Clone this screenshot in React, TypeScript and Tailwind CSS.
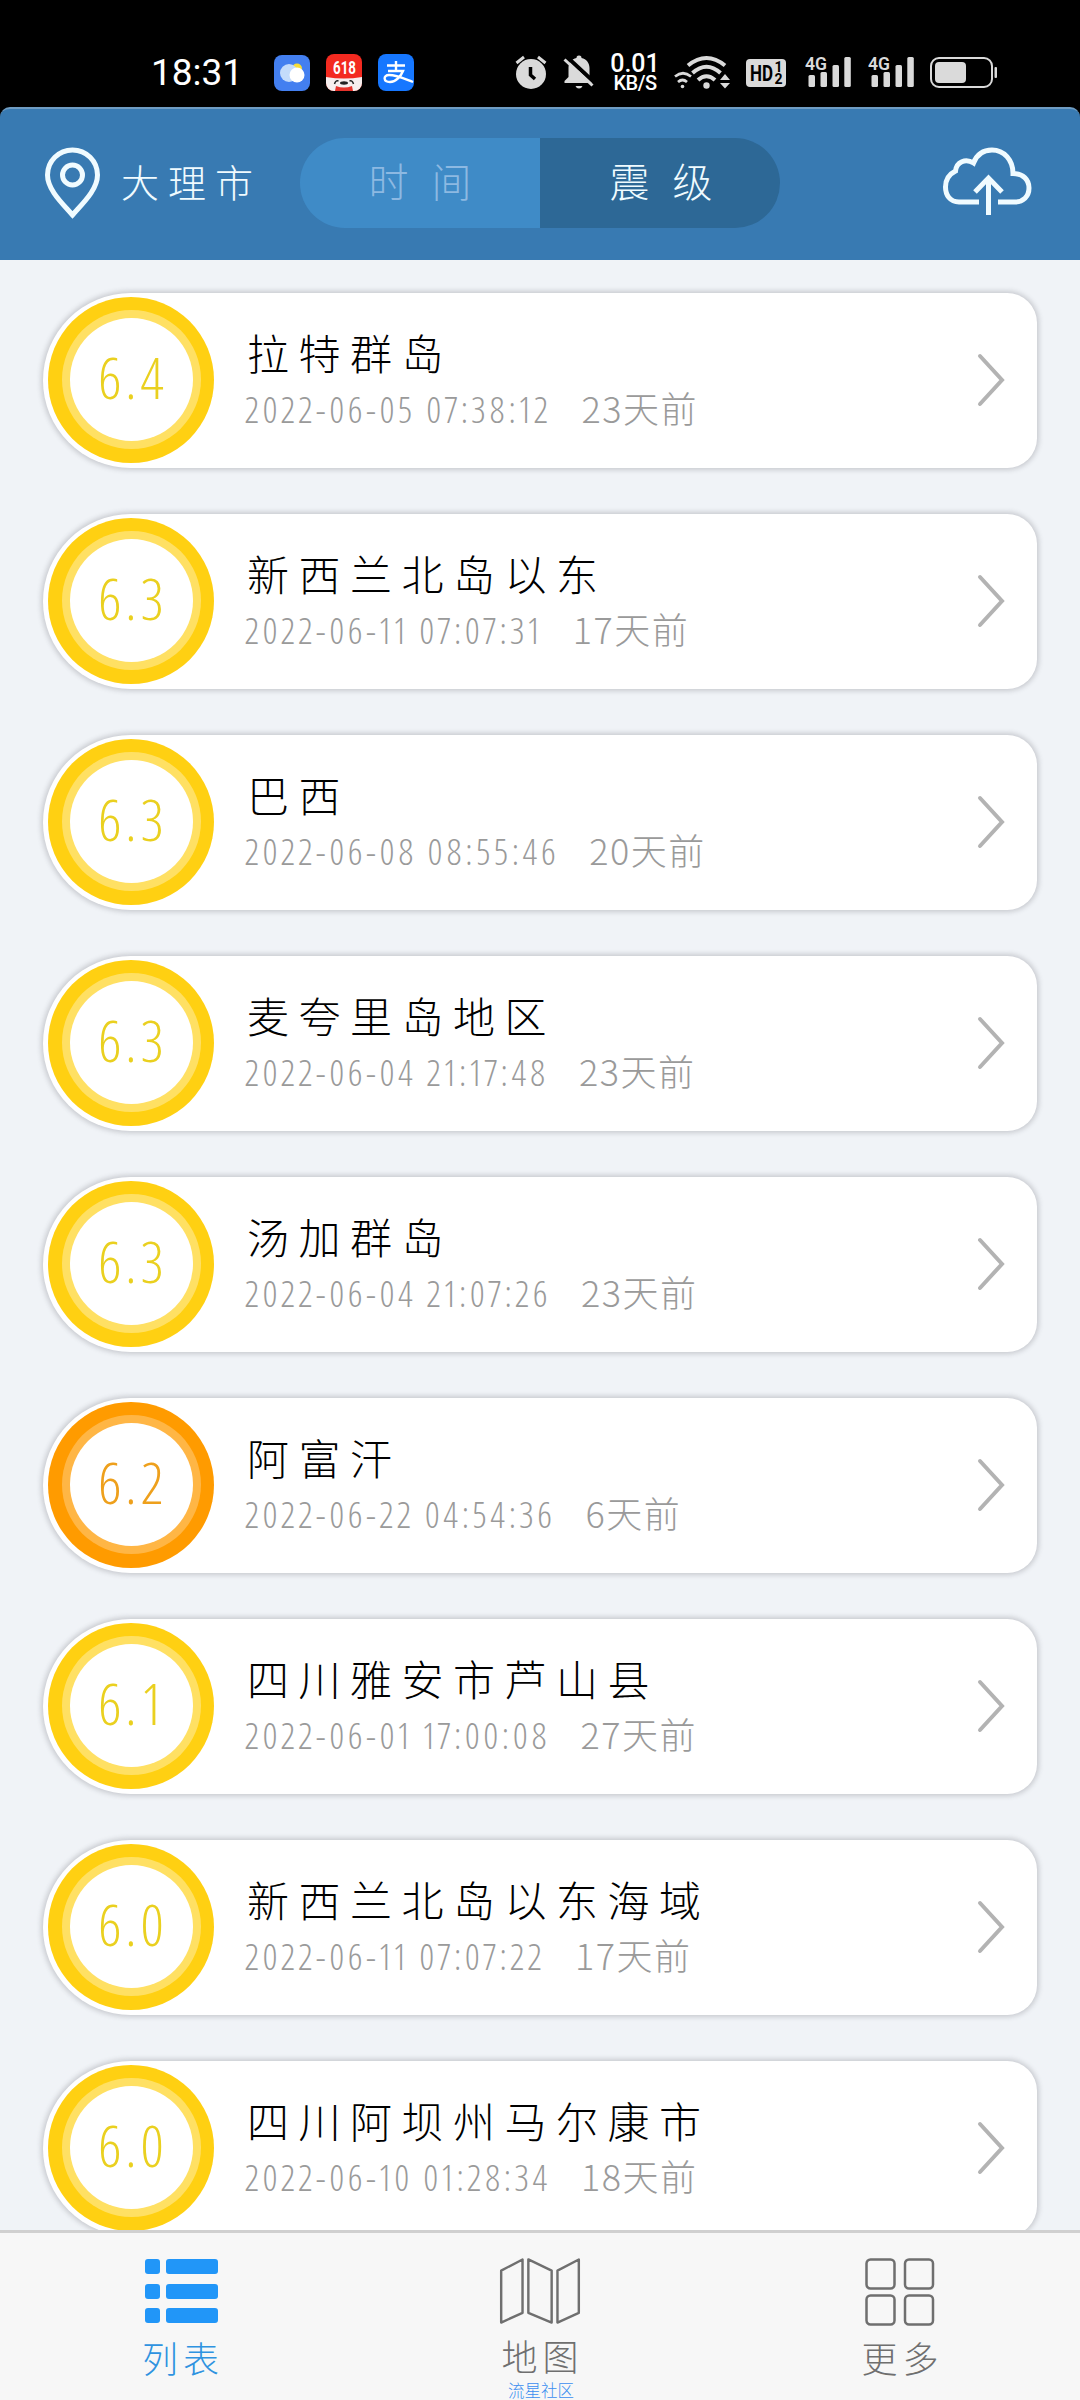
import React from 'react';

interface Quake {
    magnitude: string;
    place: string;
    time: string;
    ago: string;
    level: 'yellow' | 'orange';
}

const quakes: Quake[] = [
    { magnitude: '6.4', place: '拉特群岛', time: '2022-06-05 07:38:12', ago: '23天前', level: 'yellow' },
    { magnitude: '6.3', place: '新西兰北岛以东', time: '2022-06-11 07:07:31', ago: '17天前', level: 'yellow' },
    { magnitude: '6.3', place: '巴西', time: '2022-06-08 08:55:46', ago: '20天前', level: 'yellow' },
    { magnitude: '6.3', place: '麦夸里岛地区', time: '2022-06-04 21:17:48', ago: '23天前', level: 'yellow' },
    { magnitude: '6.3', place: '汤加群岛', time: '2022-06-04 21:07:26', ago: '23天前', level: 'yellow' },
    { magnitude: '6.2', place: '阿富汗', time: '2022-06-22 04:54:36', ago: '6天前', level: 'orange' },
    { magnitude: '6.1', place: '四川雅安市芦山县', time: '2022-06-01 17:00:08', ago: '27天前', level: 'yellow' },
    { magnitude: '6.0', place: '新西兰北岛以东海域', time: '2022-06-11 07:07:22', ago: '17天前', level: 'yellow' },
    { magnitude: '6.0', place: '四川阿坝州马尔康市', time: '2022-06-10 01:28:34', ago: '18天前', level: 'yellow' },
];

const levelStyles = {
    yellow: { outer: 'bg-[#ffd012]', inner: 'bg-[#ffe063]', text: 'text-[#ead01f]' },
    orange: { outer: 'bg-[#ff9b00]', inner: 'bg-[#ffb645]', text: 'text-[#eea01c]' },
};

function Signal() {
    return (
        <svg width="46" height="34" viewBox="0 0 46 34" fill="#dadada">
            <text x="0" y="16" fontSize="19" fontWeight="600" textLength="22" lengthAdjust="spacingAndGlyphs">4G</text>
            <rect x="3.5" y="21" width="6.5" height="12" rx="1.5" />
            <rect x="15.5" y="18" width="6.5" height="15" rx="1.5" />
            <rect x="27.5" y="11" width="6.5" height="22" rx="1.5" />
            <rect x="39.3" y="3" width="6.5" height="30" rx="1.5" />
        </svg>
    );
}

function StatusBar() {
    return (
        <div className="flex h-[107px] items-start bg-black pt-[54px] font-[Roboto,'Noto_Sans_CJK_SC',sans-serif] text-white">
            <div className="ml-[151px] w-[92px] whitespace-nowrap text-[37px] font-normal leading-[38px]">18:31</div>
            {/* weather */}
            <svg className="ml-[31px]" width="36" height="37" viewBox="0 0 36 37">
                <rect y="1" width="36" height="36" rx="8" fill="#437ff0" />
                <circle cx="23" cy="14.5" r="5" fill="#f7dc35" />
                <circle cx="15" cy="19" r="9" fill="#c4dcfb" />
                <circle cx="23" cy="21" r="7.5" fill="#fff" />
            </svg>
            {/* shopping */}
            <svg className="ml-4" width="36" height="37" viewBox="0 0 36 37">
                <defs>
                    <clipPath id="shop"><rect width="36" height="37" rx="8" /></clipPath>
                </defs>
                <g clipPath="url(#shop)">
                    <rect width="36" height="37" fill="#f32a20" />
                    <path d="M0 23q18 3 36 0v14H0z" fill="#f6eeee" />
                    <text x="7" y="19.5" fontSize="18" fontWeight="700" fill="#fff" textLength="23" lengthAdjust="spacingAndGlyphs">618</text>
                    <path d="M8.5 30q1-4 4-3M27.5 30q-1-4-4-3" fill="none" stroke="#222" strokeWidth="1.5" />
                    <ellipse cx="18" cy="29" rx="4" ry="1.7" fill="#222" />
                    <path d="M10 32q8 3 16 0l1 5H9z" fill="#e5322b" />
                </g>
            </svg>
            {/* pay */}
            <svg className="ml-4" width="36" height="37" viewBox="0 0 36 37" fill="none" stroke="#fff">
                <rect width="36" height="37" rx="8" fill="#1677ff" stroke="none" />
                <path d="M9 11.5h18M18 7v10M10 17h15c-2 5-7 11-13 11-7 0-7-7-1-7 8 0 16 4 24 7" strokeWidth="2.4" />
            </svg>

            <svg className="ml-[100px]" width="34" height="36" viewBox="0 0 34 36">
                <circle cx="17" cy="20" r="15" fill="#dadada" />
                <path d="M2.5 9l7.5-6M31.5 9l-7.5-6" stroke="#dadada" strokeWidth="3" />
                <path d="M16.5 13v8l4.5 4" fill="none" stroke="#000" strokeWidth="3.5" />
            </svg>
            <svg className="ml-[15px]" width="32" height="36" viewBox="0 0 32 36">
                <path d="M16 1.5c2 0 2.5 1 2.5 2.5 5 1 8 5 8 10v9l4 4v2H1.5v-2l4-4v-9c0-5 3-9 8-10 0-1.5.5-2.5 2.5-2.5zM12.5 32h7q-1 2.5-3.5 2.5T12.5 32z" fill="#dadada" />
                <path d="M4 3l28 26" stroke="#000" strokeWidth="4" />
                <path d="M1.5 5.5l28 26" stroke="#dadada" strokeWidth="3" />
            </svg>
            <div className="ml-[15px] flex w-[50px] flex-col items-center font-medium">
                <span className="text-[25px] leading-[20px]">0.01</span>
                <span className="text-[20px] leading-[18px] tracking-[-0.5px]">KB/S</span>
            </div>
            <svg className="ml-3" width="60" height="36" viewBox="0 0 60 36" fill="none" stroke="#dadada">
                <path d="M3 22.5q8-6.5 16 0M6 28q4.5-4 9 0" strokeWidth="2.7" />
                <path d="M16 11.5q18.5-15 37 0M20.5 19q14-12.5 28 0M26 26q8.5-7.5 17 0" strokeWidth="4" />
                <circle cx="10.5" cy="32.5" r="1.8" fill="#dadada" stroke="none" />
                <circle cx="34.5" cy="31.5" r="3.2" fill="#dadada" stroke="none" />
                <path d="M53 20l5 6H48zM53 34.5l5-5.5H48z" fill="#dadada" stroke="none" />
            </svg>
            <svg className="ml-[14px]" width="40" height="36" viewBox="0 0 40 36">
                <rect y="5" width="40" height="28" rx="4" fill="#dadada" />
                <text x="4" y="27" fontSize="22" fontWeight="700" textLength="23" lengthAdjust="spacingAndGlyphs">HD</text>
                <text x="28.5" y="17.5" fontSize="14" fontWeight="700">1</text>
                <text x="28.5" y="30" fontSize="14" fontWeight="700">2</text>
            </svg>
            <div className="ml-[19px] flex gap-[17px]">
                <Signal />
                <Signal />
            </div>
            <svg className="ml-[16px]" width="68" height="36" viewBox="0 0 68 36">
                <rect x="1" y="4" width="61" height="29" rx="8" fill="none" stroke="#dadada" strokeWidth="2" />
                <rect x="5" y="8" width="31" height="21" rx="4" fill="#dadada" />
                <rect x="64.5" y="13" width="2.5" height="11" rx="1" fill="#dadada" />
            </svg>
        </div>
    );
}

function Header() {
    return (
        <div className="bg-black">
            <header className="flex h-[153px] items-center rounded-t-[10px] border-t-2 border-[#6f9cc2] bg-[#387ab2] pb-1 text-[#f0fbff]">
                <svg className="ml-[45px]" width="55" height="72" viewBox="0 0 55 72" fill="none" stroke="#f0fbff" strokeWidth="5">
                    <path d="M27.5 68C18 57 2.5 43 2.5 28a25 25 0 0 1 50 0c0 15-15.5 29-25 40z" />
                    <circle cx="27.5" cy="28" r="10" />
                </svg>
                <div className="ml-[21px] w-[157px] pb-[3px] text-[38px] leading-none tracking-[9px]">大理市</div>
                <div className="ml-[22px] flex h-[90px] w-[480px] overflow-hidden rounded-full text-[40px] leading-none">
                    <button className="w-1/2 bg-[#3f8bc7] pb-[6px] pl-[23px] text-[#8db9e2] tracking-[23px]">时间</button>
                    <button className="w-1/2 bg-[#2d6896] pb-[6px] pl-[25px] tracking-[23px]">震级</button>
                </div>
                <svg className="ml-[160px]" width="95" height="75" viewBox="0 0 95 75" fill="none" stroke="#f0fbff" strokeWidth="5">
                    <path d="M39 57H19C10 57 5.5 50 5.5 42c0-8 4-13 10-16 1-9 10-13 18-8C37 9 44 5 52 5c12 0 21 10 21 23.5 10 0 16 6 16 14.5S83 57 75 57H58" />
                    <path d="M48.5 70V33M35 47l13.5-14L62 47" />
                </svg>
            </header>
        </div>
    );
}

function QuakeCard({ quake }: { quake: Quake }) {
    const style = levelStyles[quake.level];

    return (
        <div className="flex h-[175px] shrink-0 items-center rounded-l-[88px] rounded-r-[30px] bg-white pb-[2px] pl-[5px] shadow-[0_0_5px_2px_rgba(60,60,70,0.22)]">
            <div className={`flex size-[166px] items-center justify-center rounded-full ${style.outer}`}>
                <div className={`flex size-[139px] items-center justify-center rounded-full ${style.inner}`}>
                    <div className={`flex size-[123px] items-center justify-center rounded-full bg-white pb-1 pl-1 font-['Open_Sans'] text-[57px] font-light leading-none tracking-[4px] font-stretch-75% ${style.text}`}>
                        {quake.magnitude}
                    </div>
                </div>
            </div>
            <div className="ml-[33px] flex-1">
                <div className="text-[42px] leading-[56px] tracking-[9.5px] text-black">{quake.place}</div>
                <div className="-ml-[2px] flex h-[56px] items-center text-[36px] leading-none text-[#9a9a9a]">
                    <span className="pt-[2px] font-['Open_Sans'] text-[37px] font-light proportional-nums tracking-[3.5px] font-stretch-75%">{quake.time}</span>
                    <span className="ml-[30px] pb-[2px] tracking-[1.5px]">{quake.ago}</span>
                </div>
            </div>
            <svg className="mr-[31px]" width="30" height="54" viewBox="0 0 30 54" fill="none" stroke="#b3b3b3" strokeWidth="4" strokeLinecap="round">
                <path d="M4 3l22 24L4 51" />
            </svg>
        </div>
    );
}

function TabBar() {
    return (
        <nav className="flex h-[170px] border-t-[3px] border-[#d0d0d0] bg-[#f7f7f7] pt-[25px] text-[36px] leading-[44px] text-[#6f6f6f]">
            <div className="flex flex-1 flex-col items-center text-[#2f93e0]">
                <svg className="ml-[3px]" width="74" height="68" viewBox="0 0 74 68" fill="#2196f8">
                    {[1, 26, 50].map(y => (
                        <React.Fragment key={y}>
                            <rect y={y} width="15" height="15" rx="3" />
                            <rect x="21" y={y} width="52" height="15" rx="3" />
                        </React.Fragment>
                    ))}
                </svg>
                <div className="mt-[9px] pl-[6px] tracking-[5px]">列表</div>
            </div>
            <div className="flex flex-1 flex-col items-center">
                <svg width="84" height="68" viewBox="0 0 84 68" fill="none" stroke="#6f6f6f" strokeWidth="2.5" strokeLinejoin="round">
                    <path d="M2 13L24 1.5v55L2 66.5zM30 1.5L54 13v53.5L30 56.5zM60 13L82 1.5v55L60 66.5z" />
                </svg>
                <div className="mt-[9px] pl-[5px] tracking-[5px]">地图</div>
                <div className="mt-[4px] ml-[2px] text-[16.5px] leading-[19px] text-[#3b8ef0]">流星社区</div>
            </div>
            <div className="flex flex-1 flex-col items-center">
                <svg width="70" height="68" viewBox="0 0 70 68" fill="none" stroke="#6f6f6f" strokeWidth="2.5">
                    <rect x="1.5" y="1.5" width="28" height="29" rx="4" />
                    <rect x="40" y="1.5" width="28" height="29" rx="4" />
                    <rect x="1.5" y="37.5" width="28" height="29" rx="4" />
                    <rect x="40" y="37.5" width="28" height="29" rx="4" />
                </svg>
                <div className="mt-[9px] pl-[5px] tracking-[5px]">更多</div>
            </div>
        </nav>
    );
}

export default function App() {
    return (
        <div className="flex h-[2400px] w-[1080px] flex-col overflow-hidden bg-[#f0f3f7] font-['Noto_Sans_CJK_SC',sans-serif] font-light">
            <StatusBar />
            <Header />
            <main className="flex flex-1 flex-col gap-[46px] overflow-hidden px-[43px] pt-[33px]">
                {quakes.map(quake => (
                    <QuakeCard key={quake.place} quake={quake} />
                ))}
            </main>
            <TabBar />
        </div>
    );
}
